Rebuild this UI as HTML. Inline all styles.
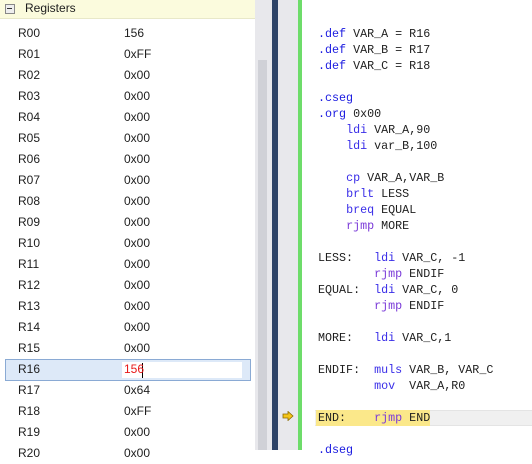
<html><head><style>
body{margin:0;width:532px;height:450px;overflow:hidden;background:#fff;position:relative;font-family:"Liberation Sans",sans-serif;}
.a{position:absolute}
.r{position:absolute;left:0;width:250px;height:21px;font-size:12px;color:#1e1e1e;line-height:21px}
.r span{position:absolute}
.c{position:absolute;left:318px;font-family:"Liberation Mono",monospace;font-size:11.7px;line-height:16px;white-space:pre;color:#1e1e1e}
.d{color:#1a1ae0}.i{color:#3a2ee8}.j{color:#7a3ad8}
</style></head><body>
<div class="a" style="left:0;top:0;width:255px;height:18px;background:#fbfbdd;border-bottom:1px solid #e8e8c8"></div>
<div class="a" style="left:5px;top:4px;width:8px;height:8px;border:1px solid #888;background:#eee"></div>
<div class="a" style="left:7px;top:8px;width:5px;height:1px;background:#333"></div>
<div class="a" style="left:25px;top:1px;font-size:12px;color:#1e1e1e">Registers</div>
<div class="a" style="left:5px;top:359px;width:244px;height:20px;background:#dde9f8;border:1px solid #8aaad4"></div>
<div class="a" style="left:122px;top:362px;width:120px;height:16px;background:#fff"></div>
<div class="a" style="left:142px;top:363px;width:1px;height:15px;background:#000"></div>
<div id="regs"></div>
<div class="a" style="left:255px;top:0;width:17px;height:450px;background:#e8e8ec"></div>
<div class="a" style="left:258px;top:60px;width:9px;height:390px;background:#d0d1d7"></div>
<div class="a" style="left:272px;top:0;width:6px;height:450px;background:#2f4468"></div>
<div class="a" style="left:278px;top:0;width:20px;height:450px;background:#e8e8ec"></div>
<div class="a" style="left:298px;top:0;width:4px;height:450px;background:#6ddc6a"></div>
<svg class="a" style="left:282px;top:411px" width="12" height="10"><path d="M1 3h5V0.5L11 5 6 9.5V7H1z" fill="#f5c518" stroke="#8a6a00" stroke-width="0.8"/></svg>
<div class="a" style="left:315px;top:410px;width:217px;height:16px;background:#f0f0f0;border-top:1px solid #e4e4e4;border-bottom:1px solid #e4e4e4;box-sizing:border-box"></div>
<div class="a" style="left:316px;top:410px;width:114px;height:16px;background:#fbe88a"></div>
<div class="c" style="top:26px"><span class="d">.def</span> VAR_A = R16
<span class="d">.def</span> VAR_B = R17
<span class="d">.def</span> VAR_C = R18

<span class="d">.cseg</span>
<span class="d">.org</span> 0x00
    <span class="i">ldi</span> VAR_A,90
    <span class="i">ldi</span> var_B,100

    <span class="i">cp</span> VAR_A,VAR_B
    <span class="i">brlt</span> LESS
    <span class="i">breq</span> EQUAL
    <span class="j">rjmp</span> MORE

LESS:   <span class="i">ldi</span> VAR_C, -1
        <span class="j">rjmp</span> ENDIF
EQUAL:  <span class="i">ldi</span> VAR_C, 0
        <span class="j">rjmp</span> ENDIF

MORE:   <span class="i">ldi</span> VAR_C,1

ENDIF:  <span class="i">muls</span> VAR_B, VAR_C
        <span class="i">mov</span>  VAR_A,R0

END:    <span class="j">rjmp</span> END

<span class="d">.dseg</span></div>
<script>
var v=["156","0xFF","0x00","0x00","0x00","0x00","0x00","0x00","0x00","0x00","0x00","0x00","0x00","0x00","0x00","0x00","156","0x64","0xFF","0x00","0x00"],h="";
for(var k=0;k<21;k++){var n="R"+(k<10?"0":"")+k;h+='<div class="r" style="top:'+(23+k*21)+'px"><span style="left:18px">'+n+'</span><span style="left:124px'+(k==16?';color:#e81818':'')+'">'+v[k]+'</span></div>';}
document.getElementById("regs").innerHTML=h;
</script>
</body></html>
